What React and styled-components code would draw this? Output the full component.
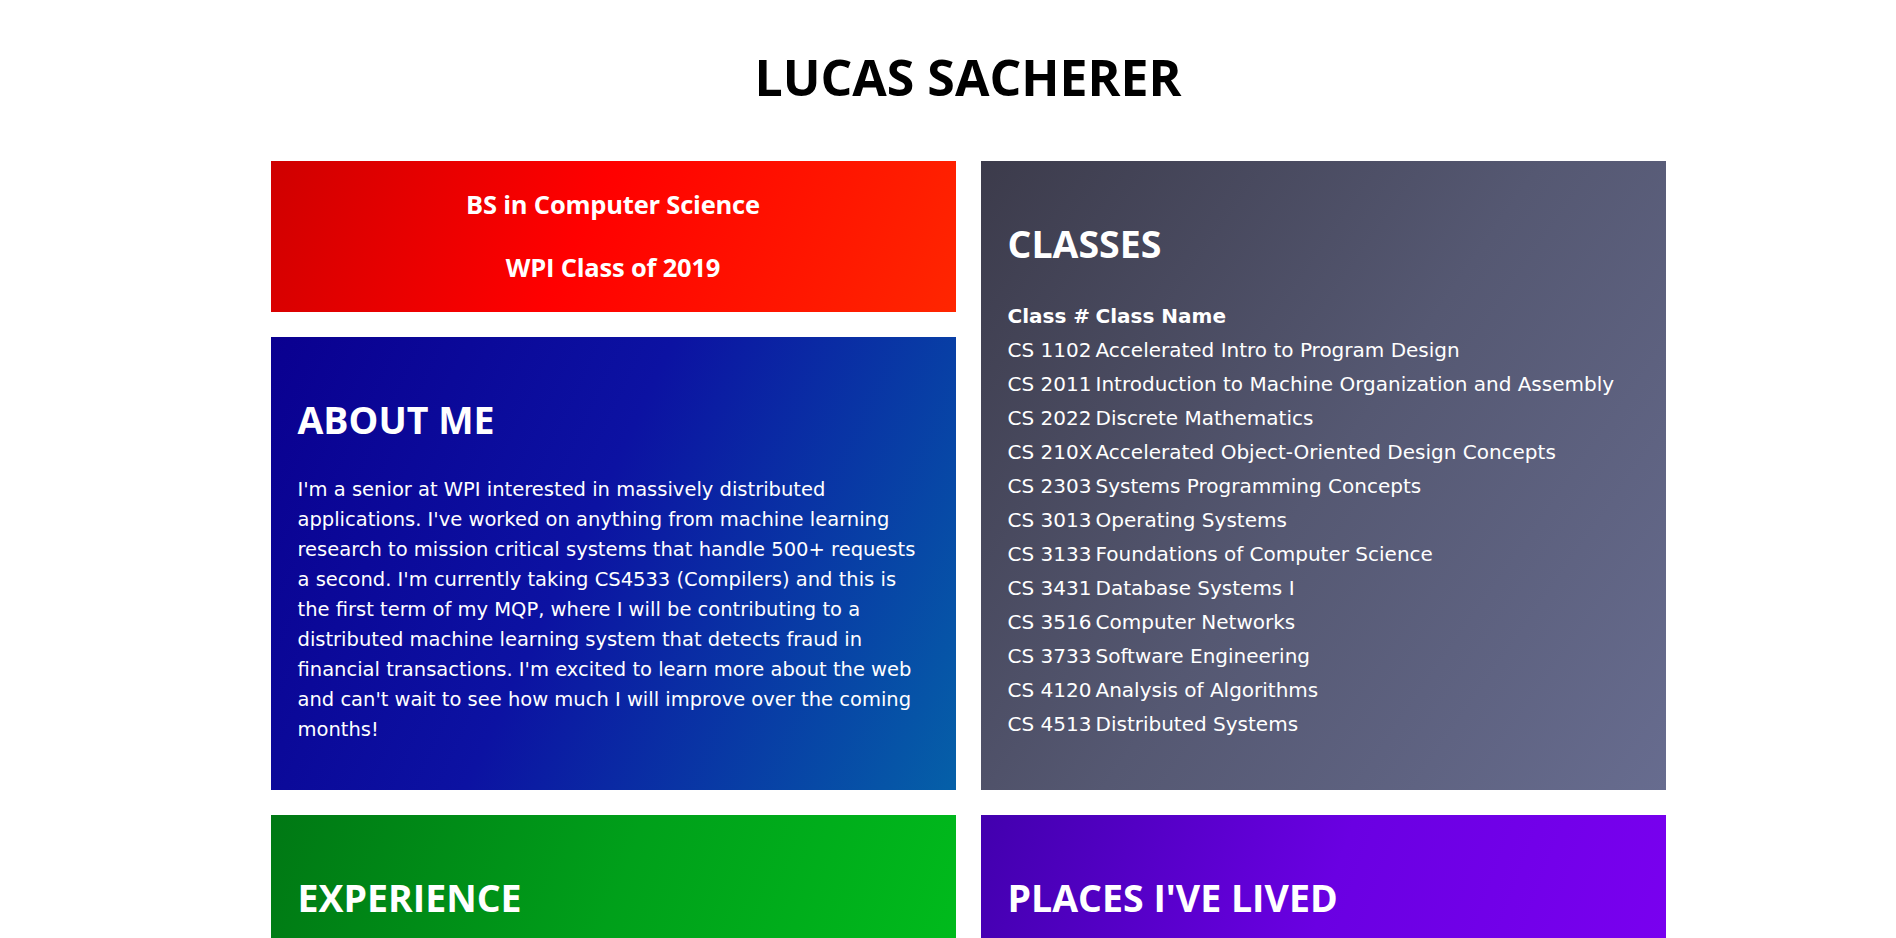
import React from "react";
import styled, { createGlobalStyle } from "styled-components";

const GlobalStyle = createGlobalStyle`
  html, body {
    margin: 0;
    padding: 0;
    background: #fff;
  }
  body {
    font-family: "DejaVu Sans", "Open Sans", sans-serif;
    color: #000;
  }
`;

const Page = styled.div`
  padding: 47px 0 60px 40px;
`;

const Name = styled.h1`
  margin: 0 0 54px;
  text-align: center;
  font-family: "Open Sans", sans-serif;
  font-weight: 700;
  font-size: 50px;
  line-height: 60px;
  color: #000;
`;

const Grid = styled.div`
  display: grid;
  grid-template-columns: 685px 685px;
  gap: 25px;
  justify-content: center;
  align-items: stretch;
`;

const Card = styled.section`
  padding: ${({ $compact }) => ($compact ? "25px 27px 27px" : "60px 27px 45px")};
  background: ${({ $bg }) => $bg};
  color: #fff;
  grid-row: ${({ $span }) => ($span ? `span ${$span}` : "auto")};
  text-align: ${({ $center }) => ($center ? "center" : "left")};
`;

const Heading = styled.h2`
  margin: 0 0 33px;
  font-family: "Open Sans", sans-serif;
  font-weight: 700;
  font-size: 37.5px;
  line-height: 45px;
  text-transform: uppercase;
`;

const Degree = styled.h3`
  margin: 0;
  font-family: "Open Sans", sans-serif;
  font-weight: 700;
  font-size: 25.5px;
  line-height: 36px;
  letter-spacing: -0.2px;

  & + & {
    margin-top: 27px;
  }
`;

const Text = styled.p`
  margin: 0;
  font-size: 19.5px;
  line-height: 30px;
`;

const Table = styled.table`
  border-collapse: collapse;
  font-size: 20px;
`;

const Cell = styled.td`
  padding: 0;
  height: 34px;
  line-height: 34px;
  white-space: nowrap;
  text-align: left;
  font-weight: ${({ $head }) => ($head ? 700 : 400)};
  width: ${({ $num }) => ($num ? "88px" : "auto")};
`;

const gradients = {
  red: "linear-gradient(115deg, #cf0000 0%, #ff0000 45%, #ff2600 100%)",
  blue: "linear-gradient(115deg, #0a0090 0%, #0c12a2 45%, #0560a8 100%)",
  slate: "linear-gradient(125deg, #3c3b4b 0%, #555872 50%, #676c8f 100%)",
  green: "linear-gradient(110deg, #007814 0%, #00a01a 50%, #00bc1c 100%)",
  purple: "linear-gradient(110deg, #4200ae 0%, #6a00e2 50%, #7a00f0 100%)",
};

const classes = [
  ["CS 1102", "Accelerated Intro to Program Design"],
  ["CS 2011", "Introduction to Machine Organization and Assembly"],
  ["CS 2022", "Discrete Mathematics"],
  ["CS 210X", "Accelerated Object-Oriented Design Concepts"],
  ["CS 2303", "Systems Programming Concepts"],
  ["CS 3013", "Operating Systems"],
  ["CS 3133", "Foundations of Computer Science"],
  ["CS 3431", "Database Systems I"],
  ["CS 3516", "Computer Networks"],
  ["CS 3733", "Software Engineering"],
  ["CS 4120", "Analysis of Algorithms"],
  ["CS 4513", "Distributed Systems"],
];

export default function App() {
  return (
    <>
      <GlobalStyle />
      <Page>
        <Name>LUCAS SACHERER</Name>
        <Grid>
          <Card $bg={gradients.red} $compact $center>
            <Degree>BS in Computer Science</Degree>
            <Degree>WPI Class of 2019</Degree>
          </Card>
          <Card $bg={gradients.slate} $span={2}>
            <Heading>Classes</Heading>
            <Table>
              <thead>
                <tr>
                  <Cell as="th" $head $num>Class #</Cell>
                  <Cell as="th" $head>Class Name</Cell>
                </tr>
              </thead>
              <tbody>
                {classes.map(([num, name]) => (
                  <tr key={num}>
                    <Cell $num>{num}</Cell>
                    <Cell>{name}</Cell>
                  </tr>
                ))}
              </tbody>
            </Table>
          </Card>
          <Card $bg={gradients.blue}>
            <Heading>About Me</Heading>
            <Text>
              I'm a senior at WPI interested in massively distributed
              applications. I've worked on anything from machine learning
              research to mission critical systems that handle 500+ requests a
              second. I'm currently taking CS4533 (Compilers) and this is the
              first term of my MQP, where I will be contributing to a
              distributed machine learning system that detects fraud in
              financial transactions. I'm excited to learn more about the web
              and can't wait to see how much I will improve over the coming
              months!
            </Text>
          </Card>
          <Card $bg={gradients.green}>
            <Heading>Experience</Heading>
          </Card>
          <Card $bg={gradients.purple}>
            <Heading>Places I've Lived</Heading>
          </Card>
        </Grid>
      </Page>
    </>
  );
}
